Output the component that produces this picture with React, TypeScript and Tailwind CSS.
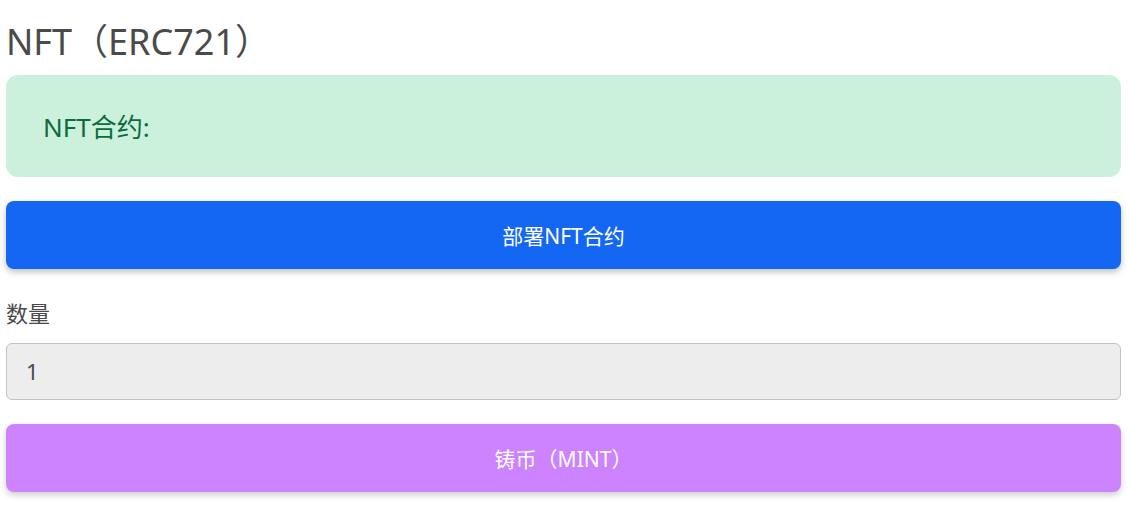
export default function App() {
  return (
    <div
      className="w-[1129px] h-[523px] bg-white pl-[6px] pr-[8px] pt-[18px]"
      style={{ fontFamily: '"Noto Sans", "Noto Sans CJK SC", sans-serif' }}
    >
      <h1 className="text-[36px] leading-[48px] text-[#4a4a4a] h-[57px]">NFT（ERC721）</h1>
      <div className="h-[102px] rounded-[12px] bg-[#cbf0dc] flex items-center pl-[37px]">
        <span className="text-[26px] text-[#0c6b3c] mt-[2px]">NFT合约:</span>
      </div>
      <button className="mt-[24px] w-full h-[68px] rounded-[8px] bg-[#1467f2] text-white text-[21px] shadow-[0_3px_6px_rgba(0,0,0,0.25)] flex items-center justify-center pt-[3px]">
        部署NFT合约
      </button>
      <div className="mt-[28px] text-[22px] leading-[32px] text-[#4a4a4a]">数量</div>
      <div className="mt-[14px] h-[57px] rounded-[6px] border border-[#c2c2c2] bg-[#ededed] flex items-center pl-[19px] text-[22px] text-[#4a4a4a]">
        1
      </div>
      <button className="mt-[24px] w-full h-[68px] rounded-[8px] bg-[#cd82fe] text-white text-[21px] shadow-[0_3px_6px_rgba(0,0,0,0.2)] flex items-center justify-center pt-[3px]">
        铸币（MINT）
      </button>
    </div>
  );
}
